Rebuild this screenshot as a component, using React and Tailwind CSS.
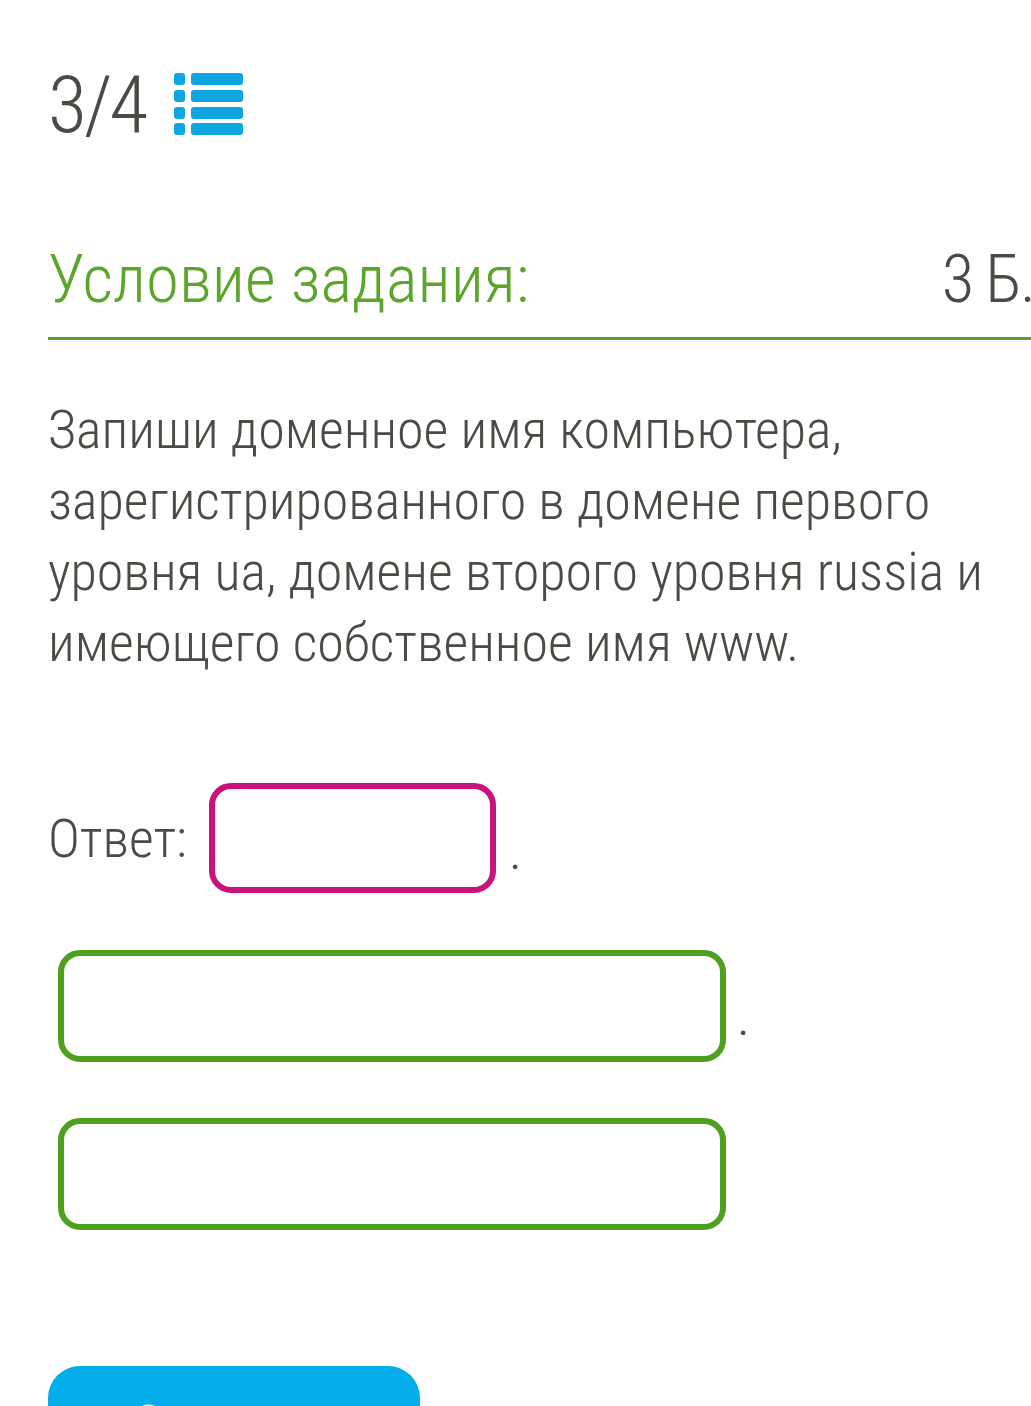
const FONT = { fontFamily: '"Roboto Condensed", Roboto, "Noto Sans", sans-serif' };

function ListIcon() {
  return (
    <svg width="70" height="64" viewBox="0 0 70 64" className="ml-[29px]">
      {[0, 17, 34, 50].map((y) => (
        <g key={y} fill="#0ea5e0">
          <rect x="0" y={y} width="11" height="12" rx="3" />
          <rect x="17" y={y} width="52" height="12" rx="3" />
        </g>
      ))}
    </svg>
  );
}

export default function App() {
  return (
    <div className="min-h-[1406px] overflow-hidden bg-white pl-[48px] text-[#4b4b45]" style={FONT}>
      <div className="flex h-[80px] items-center pt-[65px] box-content">
        <span className="text-[80px] font-light leading-none tracking-[-3px]">3/4</span>
        <ListIcon />
      </div>

      <div className="mt-[101px] flex w-[986px] items-start justify-between border-b-[3px] border-[#5a9e32] pb-[24px]">
        <h2 className="text-[67px] font-light leading-none text-[#5aa52a]">Условие задания:</h2>
        <span className="text-[67px] font-light leading-none tracking-[-2px]">3 Б.</span>
      </div>

      <p className="mt-[54px] w-[950px] text-[54px] font-light leading-[71px]">
        Запиши доменное имя компьютера, зарегистрированного в домене первого уровня ua, домене второго уровня russia и
        имеющего собственное имя www.
      </p>

      <div className="mt-[105px] flex items-center">
        <span className="text-[54px] font-light leading-[71px]">Ответ:</span>
        <input
          type="text"
          className="ml-[22px] h-[110px] w-[287px] rounded-[22px] border-[6px] border-[#c8147a] bg-white outline-none"
        />
        <span className="ml-[14px] mt-[36px] text-[40px] leading-none">.</span>
      </div>

      <div className="mt-[57px] flex items-center pl-[10px]">
        <input
          type="text"
          className="h-[112px] w-[668px] rounded-[22px] border-[6px] border-[#4fa01f] bg-white outline-none"
        />
        <span className="ml-[12px] mt-[32px] text-[40px] leading-none">.</span>
      </div>

      <div className="mt-[56px] pl-[10px]">
        <input
          type="text"
          className="h-[112px] w-[668px] rounded-[22px] border-[6px] border-[#4fa01f] bg-white outline-none"
        />
      </div>

      <button className="mt-[136px] flex h-[100px] w-[372px] items-start justify-center rounded-[32px] bg-[#04aeeb] pt-[32px] text-[54px] font-light leading-none text-white">
        Ответить
      </button>
    </div>
  );
}
